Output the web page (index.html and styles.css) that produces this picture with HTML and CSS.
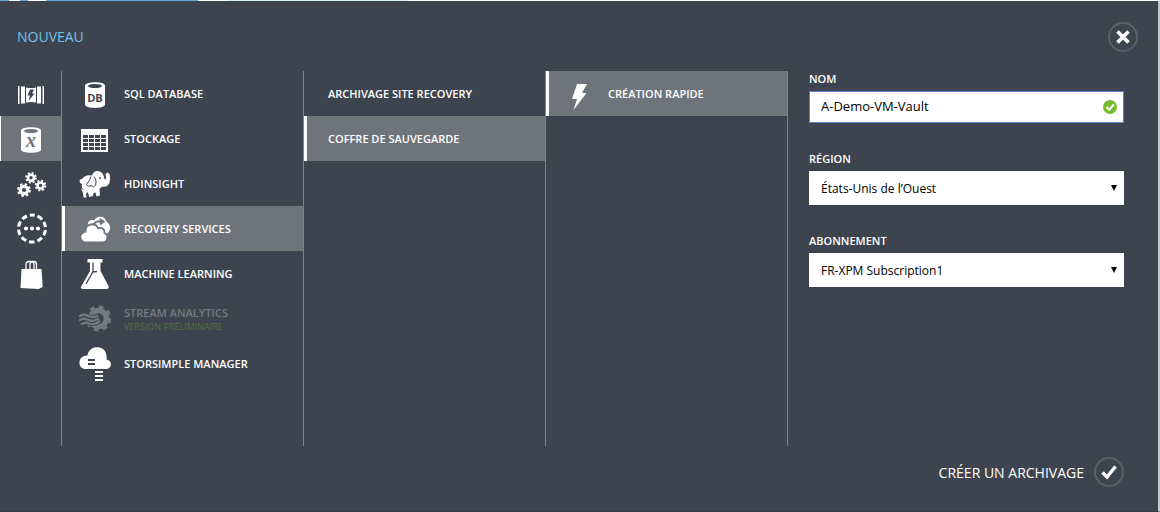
FILE: index.html
```html
<!DOCTYPE html>
<html lang="fr">
<head>
<meta charset="utf-8">
<meta name="viewport" content="width=device-width, initial-scale=1">
<title>Nouveau</title>
<link rel="stylesheet" href="styles.css">
</head>
<body>
<div class="strip" aria-hidden="true"></div>
<main class="drawer">
  <header class="drawer-head">
    <h1 class="title">NOUVEAU</h1>
    <button class="round" type="button" aria-label="Fermer">
      <svg width="30" height="30" viewBox="0 0 30 30"><path d="M9.500 9.500l11 11M20.500 9.500l-11 11" fill="none" stroke="#fff" stroke-width="3.600"/></svg>
    </button>
  </header>

  <div class="columns">
    <nav class="rail" aria-label="Catégories">
      <button class="rail-item" type="button" aria-label="Calcul">
        <svg width="32" height="32" viewBox="0 0 32 32" fill="#fff"><path d="M3 8h1.500v18H3zM6 8.500h4v17H6zM22 8.500h4v17h-4zM27.500 8H29v18h-1.500z"/><path d="M11 9.500q5 1 10 0v15q-5-1-10 0z"/><path d="M15 11.500h4l-2 4h2.500L13.500 23l1.500-5.500h-2.500z" fill="#3e444f"/></svg>
      </button>
      <button class="rail-item selected" type="button" aria-label="Services de données">
        <svg width="32" height="32" viewBox="0 0 32 32"><path d="M6 7.500C6 3.200 26 3.200 26 7.500v19c0 4.300-20 4.300-20 0z" fill="#fff"/><ellipse cx="16" cy="8" rx="7" ry="2" fill="#6e747a"/><text class="var" x="16" y="24" text-anchor="middle">x</text></svg>
      </button>
      <button class="rail-item" type="button" aria-label="Services d’application">
        <svg width="32" height="32" viewBox="0 0 32 32" fill="none" stroke="#fff"><circle cx="9" cy="22" r="3.700" stroke-width="3.200"/><circle cx="9" cy="22" r="5.900" stroke-width="2" stroke-dasharray="2.400 2.234"/><circle cx="16" cy="9.800" r="3" stroke-width="2.600"/><circle cx="16" cy="9.800" r="4.900" stroke-width="1.800" stroke-dasharray="2 1.848"/><circle cx="25.500" cy="17.500" r="3" stroke-width="2.600"/><circle cx="25.500" cy="17.500" r="4.900" stroke-width="1.800" stroke-dasharray="2 1.848"/></svg>
      </button>
      <button class="rail-item" type="button" aria-label="Services réseau">
        <svg width="32" height="32" viewBox="0 0 32 32" fill="#fff"><circle cx="17" cy="15.500" r="13.500" fill="none" stroke="#fff" stroke-width="3" stroke-dasharray="5.500 2.982" stroke-dashoffset="2.750" transform="rotate(-90 17 15.500)"/><circle cx="11" cy="15.500" r="2.100"/><circle cx="17" cy="15.500" r="2.100"/><circle cx="23" cy="15.500" r="2.100"/></svg>
      </button>
      <button class="rail-item" type="button" aria-label="Marketplace">
        <svg width="32" height="32" viewBox="0 0 32 32"><path d="M6.500 11h20l1.200 18-4 2L5.500 30z" fill="#fff"/><path d="M11 11V6.500q0-3 3-3h2q3 0 3 3V11M15 11V6.500q0-3 3-3h1q2.500 0 2.500 3V11" fill="none" stroke="#fff" stroke-width="1.300"/></svg>
      </button>
    </nav>

    <nav class="column" aria-label="Services">
      <button class="item" type="button">
        <svg width="32" height="32" viewBox="0 0 32 32"><path d="M6 7.500C6 3 26 3 26 7.500v19c0 4.500-20 4.500-20 0z" fill="#fff"/><ellipse cx="16" cy="8" rx="7" ry="2" fill="#3e444f"/><text class="db" x="16" y="24" text-anchor="middle">DB</text></svg>
        <span>SQL DATABASE</span>
      </button>
      <button class="item" type="button">
        <svg width="32" height="32" viewBox="0 0 32 32"><path d="M2 6h27v23H2z" fill="#fff"/><path d="M4 12h5v3H4zm6 0h5v3h-5zm6 0h5v3h-5zm6 0h5v3h-5zM4 16h5v3H4zm6 0h5v3h-5zm6 0h5v3h-5zm6 0h5v3h-5zM4 20h5v3H4zm6 0h5v3h-5zm6 0h5v3h-5zm6 0h5v3h-5zM4 24h5v3H4zm6 0h5v3h-5zm6 0h5v3h-5zm6 0h5v3h-5z" fill="#3e444f"/></svg>
        <span>STOCKAGE</span>
      </button>
      <button class="item" type="button">
        <svg width="32" height="32" viewBox="0 0 32 32"><path d="M3.500 10.500Q7 6 13 7.500q1-4 5-4.500 5 0 6.500 4.500l1 3.500q1.500 1 1.500-1L26.500 6l2-1.500L30.500 6q1.500 7-1 10.500-2 3-6 2l-2 1.500-1 1 .5 6.500-3.500 1-1-4-2 .500-.5 3-4 1-.500-3-1-2-1.500 2 .500 3.500H4.500L4 25l-1.500-3 .5-6L1 15l-.500-3z" fill="#fff"/><path d="M12 8.500q-1 4-4.500 8 1.500 2.500 3.500 1.500 2-1 3.500 1 3-1 2.500-5.500 0-3-2-5" fill="none" stroke="#3e444f" stroke-width="1"/><circle cx="21" cy="10" r=".900" fill="#3e444f"/><path d="M1 18.500l3 3" stroke="#3e444f" stroke-width="1"/></svg>
        <span>HDINSIGHT</span>
      </button>
      <button class="item selected" type="button" aria-current="true">
        <svg width="32" height="32" viewBox="0 0 32 32"><path d="M9 13c-1-5 3-7 6-5.500C18 1.500 27 3 27.500 9c5 2 5 10-1 12.500H16z" fill="#fff"/><path d="M8 29.500C0 29.500-1 20 6.500 18.500 6 10.500 16 9 19 15c5-1 7 2 6.500 5C30 22 29 29.500 23.500 29.500z" fill="#fff" stroke="#6e747a" stroke-width="1.800"/><path d="M14.500 11q3.500-3.500 7.500-2.500" fill="none" stroke="#6e747a" stroke-width="2"/><path d="M20.500 5l6 3.500-5.500 4z" fill="#6e747a"/></svg>
        <span>RECOVERY SERVICES</span>
      </button>
      <button class="item" type="button">
        <svg width="32" height="32" viewBox="0 0 32 32"><path d="M8.500 1h15v3.500h-2V13l8 15q1 3-2 3h-23q-4 0-2-3l8.500-15V4.500h-2.500z" fill="#fff"/><path d="M14 4.500v9L7 26M14 14l4-.500" fill="none" stroke="#3e444f" stroke-width="1.300"/></svg>
        <span>MACHINE LEARNING</span>
      </button>
      <button class="item disabled" type="button" disabled>
        <svg width="32" height="32" viewBox="0 0 32 32" fill="none" stroke="#737982"><circle cx="19.500" cy="15.500" r="8" stroke-width="5.500"/><circle cx="19.500" cy="15.500" r="11.500" stroke-width="3" stroke-dasharray="4.500 4.532"/><path d="M0 13.500q4-3 8-1 6 3 11 0M0 17.500q4-3 8-1 6 3 12-1M2 21.500q4-3 8-1 7 2 11-3" stroke="#3e444f" stroke-width="4"/><path d="M0 13.500q4-3 8-1 6 3 11 0M0 17.500q4-3 8-1 6 3 12-1M2 21.500q4-3 8-1 7 2 11-3" stroke-width="2.200"/></svg>
        <span class="stack">STREAM ANALYTICS<small class="preview">VERSION PRÉLIMINAIRE</small></span>
      </button>
      <button class="item" type="button">
        <svg width="32" height="34" viewBox="0 0 32 34"><path d="M7 22C-2 22-2 8.500 8.500 8.500 10-2 25-2 27 6.500q1 3 .500 6C34 13.500 33 22 27 22z" fill="#fff"/><path d="M9 13h7M9 17h7" stroke="#3e444f" stroke-width="1.800"/><path d="M15 21h10v13H15z" fill="#3e444f"/><path d="M16 25h8M16 29h8M16 33h8" stroke="#fff" stroke-width="2"/><path d="M15 20h10v2H15z" fill="#fff"/></svg>
        <span>STORSIMPLE MANAGER</span>
      </button>
    </nav>

    <nav class="column" aria-label="Recovery Services">
      <button class="item plain" type="button"><span>ARCHIVAGE SITE RECOVERY</span></button>
      <button class="item plain selected" type="button" aria-current="true"><span>COFFRE DE SAUVEGARDE</span></button>
    </nav>

    <nav class="column" aria-label="Coffre de sauvegarde">
      <button class="item selected" type="button" aria-current="true">
        <svg width="32" height="32" viewBox="0 0 32 32"><path d="M14 6h10l-5 9h4.500L10.500 32l3.500-11H9z" fill="#fff"/></svg>
        <span>CRÉATION RAPIDE</span>
      </button>
    </nav>

    <form class="fields" id="vault">
      <div class="field">
        <label for="name">NOM</label>
        <div class="control">
          <input class="box name" id="name" type="text" value="A-Demo-VM-Vault">
          <svg class="valid" width="14" height="14" viewBox="0 0 14 14"><circle cx="7" cy="7" r="7" fill="#76bc2d"/><path d="M3.500 7l2.700 2.800L10.800 4.500" fill="none" stroke="#fff" stroke-width="2"/></svg>
        </div>
      </div>
      <div class="field">
        <label for="region">RÉGION</label>
        <div class="control">
          <select class="box" id="region"><option>États-Unis de l’Ouest</option></select>
          <svg class="arrow" width="6" height="6" viewBox="0 0 6 6"><path d="M0 0h6L3 6z"/></svg>
        </div>
      </div>
      <div class="field">
        <label for="subscription">ABONNEMENT</label>
        <div class="control">
          <select class="box" id="subscription"><option>FR-XPM Subscription1</option></select>
          <svg class="arrow" width="6" height="6" viewBox="0 0 6 6"><path d="M0 0h6L3 6z"/></svg>
        </div>
      </div>
    </form>
  </div>

  <footer class="drawer-foot">
    <button class="submit" type="submit" form="vault">
      <span>CRÉER UN ARCHIVAGE</span>
      <span class="round"><svg width="30" height="30" viewBox="0 0 30 30"><path d="M8.500 15.500l4.500 4.500 8.500-10.500" fill="none" stroke="#fff" stroke-width="3.400"/></svg></span>
    </button>
  </footer>
</main>
</body>
</html>
```
FILE: styles.css
```css
* { box-sizing: border-box; }
body {
  margin: 0;
  min-height: 100vh;
  display: flex;
  flex-direction: column;
  font-family: "Open Sans", "Noto Sans", sans-serif;
  font-size: 11px;
  color: #fff;
  background: #3e444f;
}
button, input, select { font: inherit; color: inherit; }
button { background: none; border: 0; padding: 0; cursor: pointer; }
svg { display: block; flex: none; }

.strip {
  height: 1px;
  background: linear-gradient(90deg, #5fb0d8 9px, #fff 9px 20px, #5fb0d8 20px 28px, #fff 28px 46px, #5fb0d8 46px 198px, #fff 198px 228px, #d5f0f3 228px 408px, #fff 408px);
}
.drawer {
  flex: 1;
  display: flex;
  flex-direction: column;
  border-right: 2px solid #c6c6c6;
  border-bottom: 1px solid #343c4b;
}
.drawer-head {
  display: flex;
  align-items: center;
  justify-content: space-between;
  padding: 2px 20px 0 17px;
  height: 70px;
}
.title {
  margin: 0;
  font-size: 14px;
  font-weight: 400;
  line-height: 30px;
  color: #72c0e8;
}
.round {
  display: block;
  width: 30px;
  height: 30px;
  border-radius: 50%;
  box-shadow: inset 0 0 0 2px #59606b;
}

.columns {
  flex: 1;
  display: grid;
  grid-template-columns: 62px repeat(3, minmax(0, 242fr)) minmax(0, 370fr);
}
.rail, .column {
  display: flex;
  flex-direction: column;
  border-right: 1px solid #7d828a;
}
.rail-item {
  height: 45px;
  display: flex;
  align-items: center;
  padding-left: 15px;
}
.rail-item.selected { background: #6e747a; box-shadow: inset 1px 0 0 #fff; }

.item {
  height: 45px;
  display: flex;
  align-items: center;
  gap: 13px;
  padding-left: 17px;
  font-weight: 600;
  line-height: 14px;
  text-align: left;
  white-space: nowrap;
}
.item.plain { padding-left: 24px; }
.item.selected { background: #6e747a; box-shadow: inset 3px 0 0 #fff; }
.item.disabled { color: #737982; cursor: default; }
.stack { padding-top: 3px; }
.preview {
  display: block;
  font-size: 9px;
  font-weight: 400;
  color: #50703d;
}
.db { font-size: 11px; font-weight: 700; fill: #3e444f; }
.var {
  font-family: "Liberation Serif", serif;
  font-size: 20px;
  font-style: italic;
  font-weight: 700;
  fill: #6e747a;
}

.fields {
  display: flex;
  flex-direction: column;
  gap: 28px;
  padding: 0 34px 0 21px;
}
.field { display: flex; flex-direction: column; gap: 4px; }
.field label { font-weight: 600; line-height: 16px; }
.control { display: grid; align-items: center; }
.control > * { grid-area: 1 / 1; }
.box {
  width: 100%;
  height: 34px;
  padding: 0 12px;
  border: 0;
  border-radius: 0;
  font-size: 12px;
  color: #000;
  background: #fff;
  appearance: none;
}
.box.name {
  height: 32px;
  padding: 0 11px 3px;
  border: 1px solid #5b84c4;
  font-size: 13px;
}
.valid { justify-self: end; margin-right: 7px; }
.arrow { justify-self: end; margin-right: 7px; pointer-events: none; }

.drawer-foot {
  display: flex;
  justify-content: flex-end;
  padding: 11px 34px 24px 0;
}
.submit {
  display: flex;
  align-items: center;
  gap: 10px;
  font-size: 14px;
}
```
